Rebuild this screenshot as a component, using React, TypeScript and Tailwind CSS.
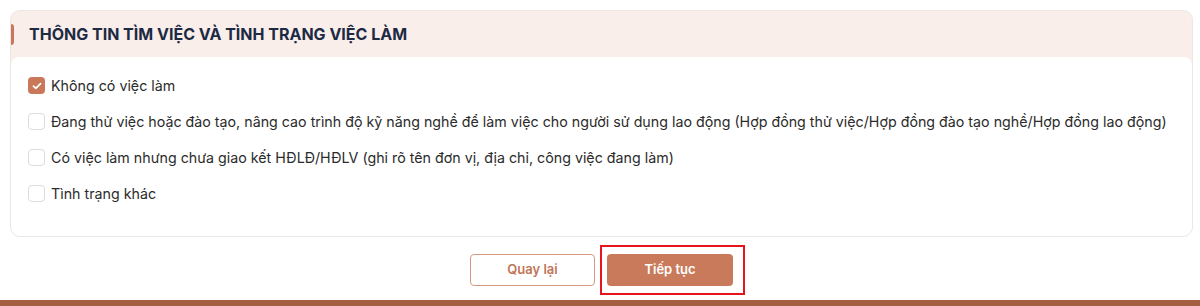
import { useState } from 'react'

const OPTIONS = [
  'Không có việc làm',
  'Đang thử việc hoặc đào tạo, nâng cao trình độ kỹ năng nghề để làm việc cho người sử dụng lao động (Hợp đồng thử việc/Hợp đồng đào tạo nghề/Hợp đồng lao động)',
  'Có việc làm nhưng chưa giao kết HĐLĐ/HĐLV (ghi rõ tên đơn vị, địa chỉ, công việc đang làm)',
  'Tình trạng khác',
]

export default function App() {
  const [checked, setChecked] = useState<number[]>([0])

  const toggle = (i: number) =>
    setChecked((c) => (c.includes(i) ? c.filter((x) => x !== i) : [...c, i]))

  return (
    <div className="w-[1200px] h-[306px] bg-white flex flex-col font-['Inter',sans-serif] overflow-hidden">
      <div className="pt-[10px] pl-[10px] pr-[7px]">
        <div className="rounded-[10px] border border-[#ebe7e5] bg-[#f9eeea] overflow-hidden">
          <div className="h-[46px] flex items-center relative">
            <div className="absolute left-0 top-[13px] w-[3px] h-[21px] bg-[#c9785a] rounded-r-sm" />
            <h2 className="pl-[18px] text-[16px] font-bold text-[#1c2a44]">
              THÔNG TIN TÌM VIỆC VÀ TÌNH TRẠNG VIỆC LÀM
            </h2>
          </div>
          <div className="bg-white rounded-t-[8px] px-[17px] pt-[19px] pb-[33px] flex flex-col gap-[17px]">
            {OPTIONS.map((label, i) => {
              const on = checked.includes(i)
              return (
                <label key={i} className="flex items-center gap-[6px] cursor-pointer h-[19px]">
                  <span
                    onClick={() => toggle(i)}
                    className={
                      on
                        ? 'w-[17px] h-[17px] rounded-[4px] bg-[#c9785a] flex items-center justify-center shrink-0'
                        : 'w-[17px] h-[17px] rounded-[4px] border border-[#dcdcdc] bg-white shrink-0'
                    }
                  >
                    {on && (
                      <svg width="10" height="8" viewBox="0 0 10 8" fill="none">
                        <path d="M1.5 4.2 3.8 6.3 8.5 1.6" stroke="white" strokeWidth="1.8" strokeLinecap="round" strokeLinejoin="round" />
                      </svg>
                    )}
                  </span>
                  <span className="text-[14.25px] text-[#2b2b2b] whitespace-nowrap">{label}</span>
                </label>
              )
            })}
          </div>
        </div>
      </div>

      <div className="flex justify-center pt-[17px] pl-[3px]">
        <div className="flex items-center gap-[12px]">
          <button className="w-[125px] h-[32px] rounded-[4px] border border-[#d49a82] bg-white text-[#c27557] text-[13px] font-semibold">
            Quay lại
          </button>
          <div className="relative">
            <button className="w-[126px] h-[32px] rounded-[4px] bg-[#c97a5a] text-white text-[13px] font-semibold">
              Tiếp tục
            </button>
            <span className="absolute -left-[7px] -right-[12px] -top-[9px] -bottom-[9px] border-2 border-[#e8141c] pointer-events-none" />
          </div>
        </div>
      </div>

      <div className="mt-auto h-[6px] bg-[#a65e42]" />
    </div>
  )
}
